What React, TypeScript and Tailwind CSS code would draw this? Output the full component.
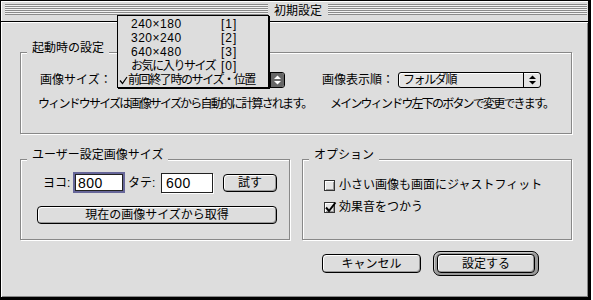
import React from 'react';

type BoxProps = { className?: string; children?: React.ReactNode };

const Stripes = ({ className = '' }: { className?: string }) => (
  <div
    className={`h-[11px] bg-[image:repeating-linear-gradient(to_bottom,#8a8a8a_0px,#8a8a8a_1px,#f2f2f2_1px,#f2f2f2_2px)] ${className}`}
  />
);

const Group = ({ title, className = '', children }: BoxProps & { title: string }) => (
  <div className={`border border-[#888] shadow-[1px_1px_0_#fff,inset_1px_1px_0_#fff] ${className}`}>
    <div className="-mt-[13px] ml-[6px] w-fit bg-[#ddd] px-[5px] leading-[16px]">{title}</div>
    {children}
  </div>
);

const Btn = ({ className = '', children }: BoxProps) => (
  <div
    className={`flex items-center justify-center rounded-[4px] border border-black bg-[#ddd] leading-none shadow-[inset_1px_1px_0_#fff,inset_-1px_-1px_0_#999] ${className}`}
  >
    {children}
  </div>
);

const UpDown = ({ color }: { color: string }) => (
  <svg width="7" height="10" viewBox="0 0 7 10">
    <polygon points="0,4 3.5,0.5 7,4" fill={color} />
    <polygon points="0,6 3.5,9.5 7,6" fill={color} />
  </svg>
);

const Checkbox = ({ checked }: { checked?: boolean }) => (
  <div className="relative h-[11px] w-[11px] shrink-0 border border-[#333] bg-[#e6e6e6] shadow-[inset_1px_1px_0_#fff,inset_-1px_-1px_0_#999]">
    {checked && (
      <svg className="absolute -left-[1px] -top-[2px]" width="13" height="13" viewBox="0 0 13 13">
        <path d="M2 6.5 L5 10 L11.5 1.5" fill="none" stroke="#000" strokeWidth="2" />
      </svg>
    )}
  </div>
);

// proportional Japanese text (narrower kana as in the reference)
const narrow = 'whitespace-nowrap tracking-[-1.4px]';
const narrower = 'whitespace-nowrap tracking-[-1.8px]';

const MenuItem = ({ label, key1, jp }: { label: string; key1: string; jp?: boolean }) => (
  <div className="flex h-[14px] items-center pl-[13px] leading-[14px]">
    <span className={`w-[90px] shrink-0 ${jp ? narrow : 'tracking-[0.5px]'}`}>{label}</span>
    <span className="whitespace-nowrap tracking-[1px]">{key1}</span>
  </div>
);

export default function App() {
  return (
    <div className="h-[300px] w-[593px] bg-white font-['Liberation_Sans','Noto_Sans_CJK_JP',sans-serif] text-[12px] text-black">
      <div className="relative flex h-[300px] w-[591px] flex-col border-b-[3px] border-l border-r-[3px] border-t border-black bg-[#ddd]">
        {/* title bar */}
        <div className="flex h-[21px] shrink-0 items-start gap-[6px] border-b border-black pl-[4px] pr-[1px] pt-[3px] shadow-[inset_1px_1px_0_#fff]">
          <Stripes className="w-[263px]" />
          <div className="-mt-[3px] leading-[20px]">初期設定</div>
          <Stripes className="flex-1" />
        </div>

        {/* body */}
        <div className="flex-1 pl-[19px] pr-[15px] pt-[30px] shadow-[inset_1px_1px_0_#fff,inset_-1px_-1px_0_#888]">
          <Group title="起動時の設定" className="h-[82px] w-[552px]">
            <div className="mt-[16px] flex h-[16px] items-center pl-[19px]">
              <div className="w-[79px]">画像サイズ：</div>
              <div className="flex h-[16px] w-[166px] justify-end rounded-[3px] border border-black bg-[#ddd]">
                <div className="flex w-[14px] items-center justify-center rounded-r-[2px] border-l border-black bg-[#666]">
                  <UpDown color="#fff" />
                </div>
              </div>
              <div className="ml-[37px] w-[76px]">画像表示順：</div>
              <div className="flex h-[16px] w-[143px] items-center rounded-[3px] border border-black bg-[#e4e4e4] shadow-[inset_1px_1px_0_#fff]">
                <div className={`flex-1 pl-[4px] leading-none ${narrow}`}>フォルダ順</div>
                <div className="flex h-full w-[17px] items-center justify-center border-l border-black">
                  <UpDown color="#000" />
                </div>
              </div>
            </div>
            <div className="mt-[8px] flex pl-[17px] leading-[16px]">
              <div className={`w-[292px] shrink-0 ${narrower}`}>ウィンドウサイズは画像サイズから自動的に計算されます。</div>
              <div className={narrower}>メインウィンドウ左下のボタンで変更できます。</div>
            </div>
          </Group>

          <div className="mt-[25px] flex gap-[12px]">
            <Group title="ユーザー設定画像サイズ" className="h-[81px] w-[270px]">
              <div className="mt-[9px] flex h-[21px] items-center pl-[22px]">
                <div className="w-[30px]">ヨコ:</div>
                <div className="h-[21px] w-[52px] border-2 border-[#666699]">
                  <div className="flex h-full items-center border border-[#222] bg-white pl-[2px] text-[14px] leading-none tracking-[0.5px]">
                    800
                  </div>
                </div>
                <div className="ml-[3px] w-[33px]">タテ:</div>
                <div className="flex h-[20px] w-[52px] items-center border border-[#222] bg-white pl-[4px] text-[14px] leading-none tracking-[0.5px] shadow-[1px_1px_0_#fff]">
                  600
                </div>
                <Btn className="ml-[10px] h-[18px] w-[54px]">試す</Btn>
              </div>
              <Btn className="ml-[16px] mt-[13px] h-[18px] w-[240px]">現在の画像サイズから取得</Btn>
            </Group>

            <Group title="オプション" className="h-[81px] w-[270px]">
              <div className="mt-[14px] flex h-[16px] items-center gap-[4px] pl-[21px]">
                <Checkbox />
                <span>小さい画像も画面にジャストフィット</span>
              </div>
              <div className="mt-[6px] flex h-[16px] items-center gap-[4px] pl-[21px]">
                <Checkbox checked />
                <span>効果音をつかう</span>
              </div>
            </Group>
          </div>

          <div className="ml-[302px] mt-[11px] flex items-center gap-[12px]">
            <Btn className="h-[19px] w-[99px]">キャンセル</Btn>
            <div className="h-[25px] w-[106px] rounded-[7px] border border-black bg-[#9a9a9a] px-[3px] py-[2px] shadow-[inset_1px_1px_0_#ccc]">
              <Btn className="h-full w-full">設定する</Btn>
            </div>
          </div>
        </div>

        {/* open popup menu */}
        <div className="absolute left-[116px] top-[14px] w-[152px] border border-black bg-[#ddd] pt-[1px] shadow-[1px_1px_0_#000]">
          <MenuItem label="240×180" key1="[1]" />
          <MenuItem label="320×240" key1="[2]" />
          <MenuItem label="640×480" key1="[3]" />
          <MenuItem label="お気に入りサイズ" key1="[0]" jp />
          <div className="flex h-[14px] items-center pl-[1px] leading-[14px]">
            <svg className="w-[9px] shrink-0" width="9" height="9" viewBox="0 0 9 9">
              <path d="M1 4.5 L3.5 7.5 L8 1" fill="none" stroke="#000" strokeWidth="1.2" />
            </svg>
            <span className={narrow}>前回終了時のサイズ・位置</span>
          </div>
        </div>
      </div>
    </div>
  );
}
